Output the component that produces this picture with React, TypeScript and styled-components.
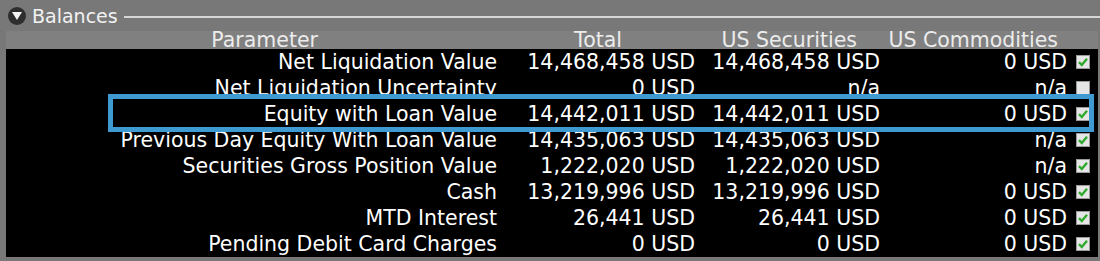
import React from "react";
import styled, { createGlobalStyle } from "styled-components";

const GlobalStyle = createGlobalStyle`
  html, body {
    margin: 0;
    padding: 0;
    background: #787878;
    font-family: "DejaVu Sans", Verdana, sans-serif;
  }
`;

const Page = styled.div`
  width: 1100px;
  height: 261px;
  overflow: hidden;
  background: #787878;
`;

const TitleBar = styled.div`
  height: 31px;
  display: flex;
  align-items: center;
  padding-left: 8px;
  gap: 6px;
`;

const Toggle = styled.span`
  width: 18px;
  height: 18px;
  border-radius: 50%;
  background: #2e2e2e;
  display: flex;
  align-items: center;
  justify-content: center;
`;

const Title = styled.span`
  color: #f2f2f2;
  font-size: 19px;
  line-height: 22px;
`;

const TitleRule = styled.div`
  flex: 1;
  height: 0;
  border-top: 2px solid #d6d6d6;
  margin-top: 2px;
`;

const Panel = styled.div`
  position: relative;
  margin-left: 6px;
  margin-right: 2px;
`;

const Grid = styled.div`
  display: grid;
  grid-template-columns: 504px 190px 185px 185px 28px;
`;

const HeadCell = styled.div<{ $pad: number }>`
  height: 18px;
  background: #808080;
  color: #ececec;
  font-size: 20.5px;
  line-height: 18px;
  text-align: right;
  padding-right: ${(p) => p.$pad}px;
  white-space: nowrap;
`;

const Cell = styled.div<{ $pad?: number }>`
  height: 26px;
  background: #000;
  color: #fff;
  font-size: 20.5px;
  line-height: 26px;
  text-align: right;
  padding-right: ${(p) => p.$pad ?? 0}px;
  white-space: nowrap;
`;

const BoxCell = styled.div`
  height: 26px;
  background: #000;
  display: flex;
  align-items: center;
  padding-left: 6px;
`;

const Highlight = styled.div`
  position: absolute;
  left: 102px;
  top: 63px;
  width: 976px;
  height: 28px;
  border: 5px solid #3e9ad1;
  pointer-events: none;
`;

const Checkbox = ({ checked }: { checked: boolean }) => (
  <svg width="14" height="14" viewBox="0 0 14 14">
    <rect x="0.5" y="0.5" width="13" height="13" fill="#e6e6e6" stroke="#9a9a9a" />
    {checked && (
      <path d="M3 7.2 L5.8 10 L11 3.8" fill="none" stroke="#2faa2f" strokeWidth="2.4" />
    )}
  </svg>
);

const rows = [
  ["Net Liquidation Value", "14,468,458 USD", "14,468,458 USD", "0 USD", true],
  ["Net Liquidation Uncertainty", "0 USD", "n/a", "n/a", false],
  ["Equity with Loan Value", "14,442,011 USD", "14,442,011 USD", "0 USD", true],
  ["Previous Day Equity With Loan Value", "14,435,063 USD", "14,435,063 USD", "n/a", true],
  ["Securities Gross Position Value", "1,222,020 USD", "1,222,020 USD", "n/a", true],
  ["Cash", "13,219,996 USD", "13,219,996 USD", "0 USD", true],
  ["MTD Interest", "26,441 USD", "26,441 USD", "0 USD", true],
  ["Pending Debit Card Charges", "0 USD", "0 USD", "0 USD", true],
] as const;

const App = () => (
  <Page>
    <GlobalStyle />
    <TitleBar>
      <Toggle>
        <svg width="10" height="8" viewBox="0 0 10 8">
          <path d="M0 0 H10 L5 8 Z" fill="#f4f4f4" />
        </svg>
      </Toggle>
      <Title>Balances</Title>
      <TitleRule />
    </TitleBar>
    <Panel>
      <Grid>
        <HeadCell $pad={192}>Parameter</HeadCell>
        <HeadCell $pad={78}>Total</HeadCell>
        <HeadCell $pad={28}>US Securities</HeadCell>
        <HeadCell $pad={12}>US Commodities</HeadCell>
        <HeadCell $pad={0} />
        {rows.map(([name, total, sec, com, checked]) => (
          <React.Fragment key={name}>
            <Cell $pad={13}>{name}</Cell>
            <Cell $pad={5}>{total}</Cell>
            <Cell $pad={5}>{sec}</Cell>
            <Cell $pad={3}>{com}</Cell>
            <BoxCell>
              <Checkbox checked={checked} />
            </BoxCell>
          </React.Fragment>
        ))}
      </Grid>
      <Highlight />
    </Panel>
  </Page>
);

export default App;
